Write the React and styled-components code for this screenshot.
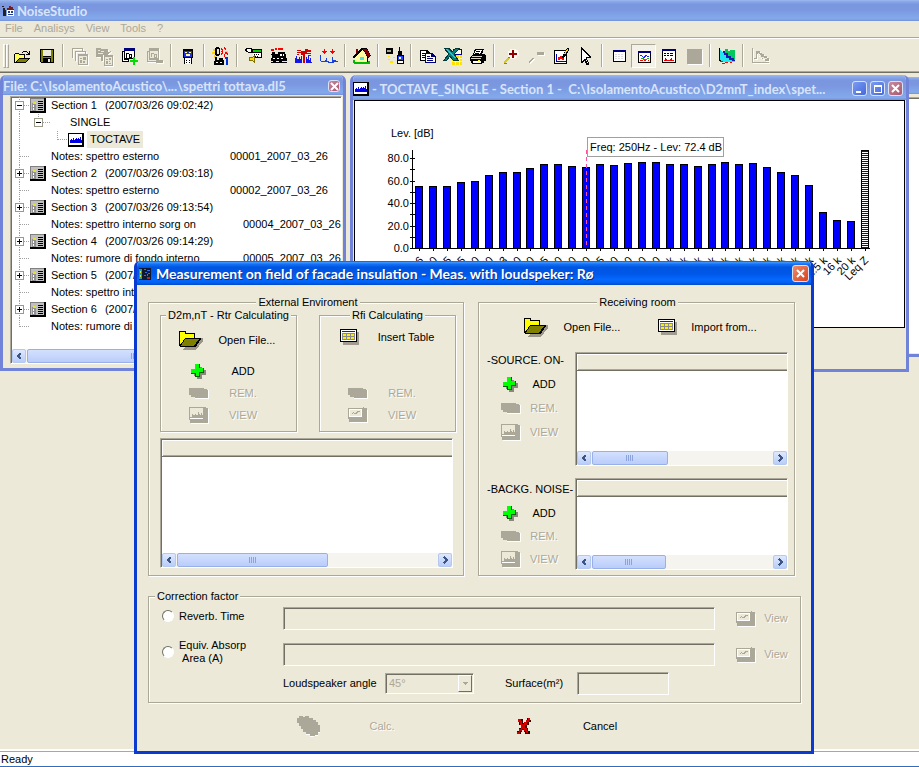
import React from "react"
import styled, { createGlobalStyle, css } from "styled-components"

const FACE = "#ece9d8"
const SHADOW = "#aca899"
const DARK = "#716f64"

const GlobalStyle = createGlobalStyle`
    * { box-sizing: border-box; }
    body {
        margin: 0;
        background: ${FACE};
        color: #000;
        font: 11px/13px "Liberation Sans", Arial, sans-serif;
    }
    button, input, select {
        font: inherit;
        color: inherit;
        margin: 0;
        padding: 0;
        border: 0;
        background: none;
    }
    svg { display: block; flex: none; }
`

/* ---------- data ---------- */

const menus = ["File", "Analisys", "View", "Tools", "?"]

const tree = [
    { type: "section", label: "Section 1", date: "(2007/03/26 09:02:42)", open: true },
    { type: "group", label: "SINGLE" },
    { type: "leaf", label: "TOCTAVE" },
    { type: "note", label: "Notes: spettro esterno", code: "00001_2007_03_26" },
    { type: "section", label: "Section 2", date: "(2007/03/26 09:03:18)" },
    { type: "note", label: "Notes: spettro esterno", code: "00002_2007_03_26" },
    { type: "section", label: "Section 3", date: "(2007/03/26 09:13:54)" },
    { type: "note", label: "Notes: spettro interno sorg on", code: "00004_2007_03_26" },
    { type: "section", label: "Section 4", date: "(2007/03/26 09:14:29)" },
    { type: "note", label: "Notes: rumore di fondo interno", code: "00005_2007_03_26" },
    { type: "section", label: "Section 5", date: "(2007/03/26 09:15:12)" },
    { type: "note", label: "Notes: spettro interno", code: "" },
    { type: "section", label: "Section 6", date: "(2007/03/26 09:16:03)" },
    { type: "note", label: "Notes: rumore di fondo", code: "", last: true },
]

// [band, bar height in chart units]
const bands = [
    ["16", 62], ["20", 62], ["25", 62], ["31.5", 66], ["40", 67], ["50", 73], ["63", 76], ["80", 76],
    ["100", 80], ["125", 84], ["160", 84], ["200", 82], ["250", 81], ["315", 84], ["400", 83], ["500", 85],
    ["630", 86], ["800", 86], ["1 k", 84], ["1.25 k", 84], ["1.6 k", 82], ["2 k", 84], ["2.5 k", 86], ["3.15 k", 84],
    ["4 k", 85], ["5 k", 81], ["6.3 k", 76], ["8 k", 73], ["10 k", 63], ["12.5 k", 36], ["16 k", 28], ["20 k", 27],
]

/* ---------- icons ---------- */

const Svg = ({ w = 20, h = 20, children }) => (
    <svg width={w} height={h} viewBox={`0 0 ${w} ${h}`} shapeRendering="crispEdges" aria-hidden="true">
        {children}
    </svg>
)

const Sheet = ({ x, y, c = "#000", bg = FACE }) => (
    <g>
        <path d={`M${x} ${y}h9v11h-9z`} fill={c} />
        <path d={`M${x + 1} ${y + 2}h7v8h-7z`} fill={bg} />
        <path d={`M${x + 2} ${y + 4}h2v1h-2zM${x + 5} ${y + 3}h2v2h-2zM${x + 2} ${y + 6}h2v3h-2zM${x + 5} ${y + 6}h1v1h-1zM${x + 5} ${y + 8}h2v1h-2z`} fill={c} />
    </g>
)

const icons = {
    open: (
        <Svg>
            <path d="M2 8h1V7h4v1h6v4h5l-4 5H2z" />
            <path d="M3 8h4v1h5v3H7l-4 4z" fill="#ffff5a" />
            <path d="M7 13h9l-3 3H4z" fill="#808000" />
            <path d="M10 6h1V5h4v1h1v1h1V5h1v4h-4V8h2V7h-1V6h-4v1h-1z" />
        </Svg>
    ),
    save: (
        <Svg>
            <path d="M3 3h14v14H4l-1-1z" />
            <path d="M4 4h2v7h8V4h2v12h-2v-4H6v4H4z" fill="#808000" />
            <path d="M6 4h8v6H6z" fill={FACE} />
            <path d="M11 13h2v3h-2z" fill={FACE} />
        </Svg>
    ),
    pages: (
        <Svg>
            <path d="M2 2h11v1H3v9H2zM12 3h1v2h-1zM5 5h11v1H6v9H5zM15 6h1v2h-1z" fill={SHADOW} />
            <path d="M8 8h10v11H8z" fill={SHADOW} />
            <path d="M9 10h8v8H9z" fill={FACE} />
            <path d="M10 12h2v1h-2zM13 11h3v3h-3zM10 14h2v3h-2zM13 15h2v2h-2z" fill={SHADOW} />
        </Svg>
    ),
    folderPages: (
        <Svg>
            <path d="M1 2h5v1h7v3l3-1-4 4H8l-3 2H1z" fill={SHADOW} />
            <path d="M3 4h2v1H3zM6 5h3v1H6zM3 7h5v1H3z" fill={FACE} />
            <Sheet x={9} y={9} c={SHADOW} />
            <path d="M6 8h2v7H6z" fill={SHADOW} />
        </Svg>
    ),
    addPage: (
        <Svg>
            <path d="M2 5h2V2h11v11H9v3H2z" />
            <path d="M4 2h11v3H4z" fill="#00007b" />
            <path d="M5 5h9v7H5z" fill="#fff" />
            <path d="M3 6h1v8h4v1H3z" fill="#fff" />
            <path d="M6 7h3v1H6zM6 7h1v5H6zM9 8h1v4H9zM9 8h3v1H9zM11 8h1v4h-1zM9 11h3v1H9z" />
            <path d="M13 11h2v3h3v2h-3v3h-2v-3h-3v-2h3z" fill="#00e000" />
        </Svg>
    ),
    remPage: (
        <Svg>
            <path d="M2 5h2V2h10v12h4v3h-7v-1H2z" fill={SHADOW} />
            <path d="M5 5h8v7H5zM3 6h1v8h7v1H3z" fill={FACE} />
            <path d="M6 7h3v1H6zM6 7h1v4H6zM9 8h3v4H9z" fill={SHADOW} />
            <path d="M10 9h1v2h-1z" fill={FACE} />
        </Svg>
    ),
    device: (
        <Svg>
            <path d="M5 3h10v8l-1 2v5H6v-5l-1-2z" />
            <path d="M7 12h6v6H7z" fill="#fff" />
            <path d="M6 5h8v6H6z" fill="#2233dd" />
            <path d="M7 6h2v1H7zM11 6h2v1h-2zM8 8h4v2H8z" fill="#ffffa0" />
            <path d="M8 14h1v1H8zM11 14h1v1h-1zM8 16h1v1H8zM11 16h1v1h-1z" />
        </Svg>
    ),
    speaker: (
        <Svg>
            <path d="M2 3h3v2H2zM1 6h3v2H1zM3 9h2v3H3zM14 5h3v3h-3z" fill="#ffd800" />
            <path d="M5 1h3v1h1v7H8v1H5V9H4V2h1z" />
            <path d="M6 3h2v5H6z" fill={FACE} />
            <path d="M10 2h1v1h1v5h-1v1h-1V7h1V4h-1zM13 1h1v1h1v2h-1V3h-1zM14 6h2v1h1v2h-1V8h-2zM13 8h1v3h-1zM10 5h1v1h-1z" fill="#f00" />
            <path d="M4 11h2v3h2v-2h4v2h1v5H3v-4h1z" />
            <path d="M5 16h2v1H5zM9 16h2v1H9z" fill="#fff" />
            <path d="M14 11h3v8h-2v-6h-1z" fill="#0033dd" />
        </Svg>
    ),
    noise: (
        <Svg>
            <path d="M2 2h6v1h10v9h-7V7H4V6H2V5H1V3h1z" />
            <path d="M3 3h4v3H4V5H3z" fill="#fff" />
            <path d="M9 4h8v2H9z" fill="#00d000" />
            <path d="M9 7h8v4H9z" fill="#fff" />
            <path d="M10 8h1v1h-1zM12 8h1v1h-1zM14 8h1v1h-1zM11 10h1v1h-1zM13 10h1v1h-1z" />
            <path d="M5 11h3l3-3v10l-3-3H5z" fill="#807000" />
            <path d="M6 12h2l2-2v6l-2-2H6z" fill="#ffe000" />
        </Svg>
    ),
    train: (
        <Svg>
            <path d="M2 3h3v2H2zM6 2h2v2H6zM9 2h5v2H9z" fill="#f00" />
            <path d="M3 6h3v2h3V6h7v2h1v4h1v3H2v-3h1V9H2V8h1z" />
            <path d="M11 8h2v2h-2zM14 8h1v2h-1zM4 12h2v1H4zM8 12h2v1H8zM12 12h2v1h-2z" fill="#fff" />
            <path d="M2 16h16v1H2zM4 14h3v3H4zM10 14h3v3h-3z" />
        </Svg>
    ),
    impact: (
        <Svg>
            <path d="M3 4h4v1h4V3h3v1h3v2h-4v1h4v1h-6V7H9v2H7V7H3V6h4V5H3z" fill="#d00000" />
            <path d="M9 6h2v11H9zM3 8h2v1H3zM14 9h3v1h-3z" fill="#d00000" />
            <path d="M1 12h1v-2h1v3h2v-2h1v2h1v-3h1v7h4v-6h1v2h1v-3h1v4h1v-2h1v4h1v1H1z" fill="#1515e8" />
        </Svg>
    ),
    dips: (
        <Svg>
            <path d="M5 3h1v2h2v1H7v1H6v1H5V7H4V6H3V5h2zM13 3h1v2h2v1h-1v1h-1v1h-1V7h-1V6h-1V5h2z" fill="#f00" />
            <path d="M1 9h1v6h4v-1h1v-2h1v3h2v1h3v-5h1v3h3v1h2v1h-4v1h-6v-1H2v-1H1z" fill="#1540e0" />
        </Svg>
    ),
    house: (
        <Svg>
            <path d="M1 14h3v2h10l4-1v3H2v-1H1z" fill="#00b800" />
            <path d="M10 3l-7 7v6h12v-6z" fill="#ffffa0" />
            <path d="M10 2h5l4 8-3 2z" fill="#000" />
            <path d="M11 3h4l3 6-2 2z" fill="#800000" />
            <path d="M8 11h4v3H8z" fill="#4fe0e8" />
            <path d="M4 3h2v4H4z" fill="#800000" />
            <path d="M1 10h1V9h1V8h1V7h1V6h1V5h1V4h1V3h1V2h2v2h-1v1H9v1H8v1H7v1H6v1H5v1H4v1H3v1H1z" />
            <path d="M15 11h1v5h-1z" />
        </Svg>
    ),
    transfer: (
        <Svg>
            <path d="M1 2h7v6H1z" />
            <path d="M2 4h4v2H2z" fill="#a8a890" />
            <path d="M3 10h2v1H3zM3 13h2v1H3zM5 15h3v2H5zM8 11h2v1H8z" fill="#ffe600" />
            <path d="M14 1h1v4h2v4h2v9h-7v-9h1V5h1z" />
            <path d="M13 10h5v4h-5z" fill="#2244ff" />
            <path d="M14 11h2v2h-2z" fill="#fff" />
            <path d="M13 15h5v2h-5z" fill="#fff" />
        </Svg>
    ),
    copy: (
        <Svg>
            <path d="M2 4h7l3 3v8H2z" />
            <path d="M3 5h5v3h3v6H3z" fill="#fff" />
            <path d="M4 7h3v1H4zM4 9h5v1H4zM4 11h5v1H4z" />
            <path d="M7 7h7l4 4v6H7z" fill="#00007b" />
            <path d="M8 8h5v3h4v5H8z" fill="#fff" />
            <path d="M9 10h3v1H9zM9 12h6v1H9zM9 14h6v1H9z" fill="#00007b" />
        </Svg>
    ),
    excel: (
        <Svg>
            <path d="M10 3h8v5h-8z" fill="#ffe" stroke="#00a" strokeWidth="1" />
            <path d="M9 9h10v10H9z" fill="#ffe100" />
            <path d="M9 12h10M9 15h10M12 9v10M16 9v10" stroke="#fff8a0" />
            <path d="M1 2h5l3 4 4-4h4l-6 6 4 6h-5l-3-4-3 4H1l5-6z" fill="#008080" stroke="#003838" strokeWidth="1" />
            <path d="M3 3h2l8 9h-2z" fill="#30c0c8" />
        </Svg>
    ),
    print: (
        <Svg>
            <path d="M7 3h9l-2 5h3v1h1v6h-2v2h-2v1H4v-1H3v-2H2v-4l3-3z" />
            <path d="M8 4h6l-2 4H6z" fill="#fff" />
            <path d="M8 5h4v1H8zM7 7h4v1H7z" />
            <path d="M4 10h10v1H4zM3 12h10v1H3z" fill="#d8d4c4" />
            <path d="M5 15h8v2H5z" fill="#fff" />
            <path d="M10 14h2v1h-2z" fill="#ff0" />
        </Svg>
    ),
    zoomIn: (
        <Svg>
            <path d="M9 3h6v1h2v2h1v4h-2v2h-2v1H9v-2H7V5h2z" fill="#fff8f0" />
            <path d="M11 4h2v3h3v2h-3v3h-2V9H8V7h3z" fill="#900000" />
            <path d="M7 11h2v2H8v1H7v1H6v1H5v1H3v-2h1v-1h1v-1h1v-1h1z" fill="#d8c820" />
            <path d="M7 11h2v1H7zM3 17h3v1H3z" fill="#807c60" />
        </Svg>
    ),
    zoomOut: (
        <Svg>
            <path d="M11 6h7v3h-7z" fill={SHADOW} />
            <path d="M3 15h1v-1h1v-1h1v-1h2v1H7v1H6v1H5v1H4v1H3z" fill={SHADOW} />
        </Svg>
    ),
    chartEdit: (
        <Svg>
            <path d="M3 4h13v14H3z" />
            <path d="M4 5h11v12H4z" fill="#fff" />
            <path d="M5 8h1v7h9v1H5z" fill="#00b" />
            <path d="M7 11h2v-1h2v2h2v2h-2v-1H9v1H7z" fill="#f00" />
            <path d="M12 9l4-7h2v2l-4 7-3 1z" />
            <path d="M13 8l3-5h1v1l-3 5z" fill="#ffd800" />
        </Svg>
    ),
    arrow: (
        <Svg>
            <path d="M5 1h1v1h1v1h1v1h1v1h1v1h1v1h1v1h1v1h1v1h1v2h-4v2h1v2h1v3h-3v-2h-1v-2H8v1H7v1H5z" />
            <path d="M6 4h1v1h1v1h1v1h1v1h1v1h1v1h1v1h-3v3h1v2h1v1h-1v-2h-1v-2H8v1H7v1H6z" fill="#fff" />
        </Svg>
    ),
    win: (
        <Svg>
            <path d="M4 4h13v12H4z" />
            <path d="M4 4h13v2H4z" fill="#00007b" />
            <path d="M5 6h11v9H5z" fill="#fff" />
            <path d="M6 8h9M6 10h9M6 12h9" stroke="#ddd" strokeDasharray="2 1" />
        </Svg>
    ),
    winChart: (
        <Svg>
            <path d="M4 5h13v12H4z" />
            <path d="M4 5h13v2H4z" fill="#00007b" />
            <path d="M5 7h11v9H5z" fill="#fff" />
            <path d="M6 9h2v1h1v1h1v-1h1V9h2v1h2v1h-2v-1h-1v1h-1v1H9v-1H8v-1H6z" fill="#22f" />
            <path d="M7 12h3v1h3v-1h2v1h-2v1H9v-1H7z" fill="#0b0" />
            <path d="M6 14h3v1H6zM10 14h2v1h-2zM13 15h2v-1h-1z" fill="#f00" />
        </Svg>
    ),
    winTable: (
        <Svg>
            <path d="M3 3h14v14H3z" />
            <path d="M3 3h14v2H3z" fill="#00007b" />
            <path d="M4 5h12v11H4z" fill="#fff" />
            <path d="M5 7h2v1H5zM8 7h2v1H8zM11 7h3v1h-3zM5 9h2v1H5zM8 9h2v1H8zM11 9h3v1h-3z" />
            <path d="M5 14h2v-1h1v1h3v-1h1v1h3v1H5z" fill="#f00" />
            <path d="M6 12h1v3H6zM12 12h1v3h-1z" fill="#22f" />
        </Svg>
    ),
    square: (
        <Svg>
            <path d="M3 3h15v15H3z" fill={SHADOW} />
        </Svg>
    ),
    surface: (
        <Svg>
            <path d="M2 4h2l2 3 3 1 4 4 5 1v3H8l-4-1-2-4z" fill="#20e8f0" />
            <path d="M8 3h3v2h2V4h5v10h-3v-2h-3v-2H9V8H7V6h1z" fill="#00c85a" />
            <path d="M6 5h2v2h3v3h3v2h3v2h1v1h-3v-1h-3v-2h-3V9H7V7H6z" fill="#1818b0" />
            <path d="M2 2h1v12h1v1H2z" />
            <path d="M3 15h3v1H3zM8 16h3v1H8zM13 16h2v1h-2zM5 17h3v1H5z" fill="#f00" />
        </Svg>
    ),
    decay: (
        <Svg>
            <path d="M2 2h1v14h16v1H2zM4 12h2V5h4v2h2v1h2v2h3v2h2v3h-4v-2h-3v-2h-2V8H7v5H4z" fill={SHADOW} />
            <path d="M8 7h1v2h2v2h3v1h3v1h-4v-1h-3v-2H8z" fill={FACE} />
        </Svg>
    ),
}

const FolderIcon = () => (
    <Svg w={26} h={20}>
        <path d="M5 20V19L23 8h2v3l-7 9z" fill="#9a978a" />
        <path d="M1 1h7v2h9v5h6v2h-1v1h-1v2h-1v1h-1v2h-1v1H2v-1H1z" />
        <path d="M2 2h5v2h9v4H7L5 11 2 15z" fill="#ffff00" />
        <path d="M7 9h14l-5 7H3z" fill="#808000" />
    </Svg>
)

const TableIcon = () => (
    <Svg w={20} h={16}>
        <path d="M3 3h16v13H3z" fill="#a09d90" />
        <path d="M0 0h17v13H0z" />
        <path d="M1 1h15v11H1z" fill="#fff" />
        <path d="M2 4h13v7H2z" fill="#8a8a8a" />
        <path d="M2 2h13v1H2z" fill="#1414c8" />
        <path d="M3 5h3v2H3zM7 5h3v2H7zM11 5h3v2h-3zM3 8h3v2H3zM7 8h3v2H7zM11 8h3v2h-3z" fill="#fff000" />
    </Svg>
)

const PlusIcon = () => (
    <Svg w={20} h={16}>
        <path d="M8 4h5v3h4v5h-4v4H8v-3H5V8h3z" fill="#8a877c" />
        <path d="M6 1h5v4h4v5h-4v4H6v-3H2V6h4z" fill="#006000" />
        <path d="M6 1h4v4h4v4h-4v4H7v-3H2V6h4z" fill="#00ff00" />
    </Svg>
)

const MinusIcon = () => (
    <Svg w={20} h={12}>
        <path d="M2 3h18v9H6V9H2z" fill="#fff" />
        <path d="M0 1h15v1h3v1h1v8H6v-1H2V8H0z" fill={SHADOW} />
    </Svg>
)

const SpectrumIcon = () => (
    <Svg w={20} h={18}>
        <path d="M2 3h18v15H2z" fill="#fff" />
        <path d="M0 1h14l5 1v15H1v-3H0z" fill={SHADOW} />
        <path d="M1 2h13v7h-1V7h-1v2h-1V8h-1V6H9v3H7V8H6v1H4V8H3v3H1z" fill={FACE} />
        <path d="M1 12h13v1H1z" fill="#fff" />
    </Svg>
)

const TrendIcon = () => (
    <Svg w={20} h={16}>
        <path d="M2 3h18v13H2z" fill="#fff" />
        <path d="M0 1h15V0h1v1h3v14H1v-3H0z" fill={SHADOW} />
        <path d="M1 2h13v8H1z" fill="#fff" />
        <path d="M2 3h11v6H2z" fill={FACE} />
        <path d="M3 7h1V6h1V5h1v1h2V5h1V4h3v1h-2v1H9v1H6V6H5v1z" fill={SHADOW} />
    </Svg>
)

const BlobIcon = () => (
    <Svg w={26} h={22}>
        <path d="M4 2h4v1h2V2h3v2h4v2h2v3h3v2h2v7h-2v3h-4v1h-4v-2h-4v-3H8v-3H5v-3H3V8H2V4h2z" fill="#fff" />
        <path d="M3 1h4v1h2V1h4v2h4v2h3v2h2v3h2v7h-2v3h-3v1h-5v-2H10v-2H7v-3H5v-3H3V8H1V3h2z" fill={SHADOW} />
    </Svg>
)

const CrossIcon = () => (
    <Svg w={16} h={18}>
        <path d="M3 2h4v4h3V3h1V1h3v2h1v2h-2v3h-2v3h1v3h2v3H9v-2H8v-2H6v2H5v2H1v-3h2v-3h2V8H3V5H2z" fill="#300" />
        <path d="M2 2h3v2h1v3h2V5h2V3h2V1h2v2h-1v2h-2v3H9v3h2v3h1v2h-2v-2H8v-2H6v2H4v3H1v-2h2v-3h2V8H4V5H2z" fill="#d00000" />
    </Svg>
)

const ReportIcon = () => (
    <Svg w={16} h={15}>
        <path d="M0 0h16v15H0z" />
        <path d="M0 0h14v13H0z" fill="#808080" />
        <path d="M1 1h13v12H1z" fill="#c0c0c0" />
        <path d="M2 5h4v8H2z" fill="#909090" />
        <path d="M3 7h1v2H3zM3 10h1v2H3z" fill="#fff" />
        <path d="M3 4h3v2H3z" fill="#f0e020" />
        <path d="M8 3h5v1H8zM8 5h5v1H8zM8 7h5v1H8zM8 9h5v1H8zM8 11h5v1H8z" />
    </Svg>
)

const WaveIcon = () => (
    <Svg w={16} h={14}>
        <path d="M0 0h16v14H0z" />
        <path d="M1 1h13v11H1z" fill="#fff" />
        <path d="M2 10V7h1V6h1v1h1V5h1v2h1V6h1V5h1v1h1V5h1v1h1V4h1v3h1v3z" fill="#0000e0" />
    </Svg>
)

const AppIcon = () => (
    <Svg w={12} h={12}>
        <path d="M1 3h2v2h1v6H1z" fill="#222" />
        <path d="M5 4l3-3 4 3v7H5z" fill="#fff" />
        <path d="M5 3h2V1h2v1h2v2h1v1H5z" fill="#702020" />
        <path d="M6 6h2v2H6zM9 6h2v2H9zM6 9h5v1H6z" fill="#223c90" />
        <path d="M0 1h2v1H0z" fill="#222" />
    </Svg>
)

const DialogIcon = () => (
    <Svg w={12} h={12}>
        <path d="M0 0h12v12H0z" fill="#101830" />
        <path d="M0 1h3v10H0z" fill="#20a0a0" />
        <path d="M1 3h1v2H1zM1 7h1v2H1z" fill="#e0e020" />
        <path d="M5 1h2v1H5zM8 2h3v1H8zM6 4h2v1H6zM9 5h2v1H9zM5 7h2v1H5zM8 6h1v2H8z" fill="#2a6cff" />
        <path d="M8 9h3v2H8z" fill="#c02020" />
    </Svg>
)

const glyphs = {
    min: <path d="M3 9h5v2H3z" fill="#fff" />,
    max: <path d="M3 3h8v8H3zM4 5v5h6V5z" fill="#fff" fillRule="evenodd" />,
    close: <path d="M3 3l7 7M10 3l-7 7" stroke="#fff" strokeWidth="2" shapeRendering="auto" />,
}

/* ---------- windows ---------- */

const Caption = ({ kind, tone, label, size }) => (
    <CaptionButton type="button" $tone={tone} $size={size} aria-label={label}>
        <Svg w={13} h={13}>{glyphs[kind]}</Svg>
    </CaptionButton>
)

const ScrollBar = ({ thumb }) => (
    <Scroll>
        <ScrollButton type="button" tabIndex={-1} aria-label="Scroll left">
            <Svg w={6} h={8}><path d="M0 4l4-4v1h1v1L3 4l2 2v1H4v1z" fill="#3d5585" /></Svg>
        </ScrollButton>
        <ScrollTrack>
            <ScrollThumb style={{ width: `${thumb}%` }}>
                <i /><i /><i /><i />
            </ScrollThumb>
        </ScrollTrack>
        <ScrollButton type="button" tabIndex={-1} aria-label="Scroll right">
            <Svg w={6} h={8}><path d="M6 4L2 0v1H1v1l2 2-2 2v1h1v1z" fill="#3d5585" /></Svg>
        </ScrollButton>
    </Scroll>
)

const treeIndent = { section: 18, note: 18, group: 48, leaf: 56 }

const TreeLines = ({ type, open, last }) => (
    <Svg w={treeIndent[type]} h={17}>
        <g stroke="#a0a0a0" strokeDasharray="1 1" fill="none">
            <path d={last ? "M7.5 0v9" : "M7.5 0v17"} />
            {(type === "section" || type === "note") && <path d="M8 8.5h10" />}
            {type === "group" && <path d="M26.5 0v9M27 8.5h11" />}
            {type === "leaf" && <path d="M45.5 0v9M46 8.5h10" />}
        </g>
        {(type === "section" || type === "group") && (
            <g transform={type === "group" ? "translate(22 4)" : "translate(3 4)"}>
                <path d="M0 0h9v9H0z" fill="#9a9a8a" />
                <path d="M1 1h7v7H1z" fill="#fff" />
                <path d={open || type === "group" ? "M2 4h5v1H2z" : "M2 4h2V2h1v2h2v1H5v2H4V5H2z"} />
            </g>
        )}
    </Svg>
)

const TreeRow = ({ item }) => (
    <Row>
        <TreeLines {...item} />
        {item.type === "section" && <ReportIcon />}
        {item.type === "leaf" && <WaveIcon />}
        {item.type === "section" && <NodeLabel>{item.label}<Stamp>{item.date}</Stamp></NodeLabel>}
        {item.type === "group" && <GroupLabel>{item.label}</GroupLabel>}
        {item.type === "leaf" && <PickedLabel>{item.label}</PickedLabel>}
        {item.type === "note" && <><Note>{item.label}</Note><span>{item.code}</span></>}
    </Row>
)

const FileWindow = () => (
    <FileFrame>
        <TitleBar $h={20}>
            <Title>File: C:\IsolamentoAcustico\...\spettri tottava.dl5</Title>
            <Caption kind="close" tone="rose" size={12} label="Close file" />
        </TitleBar>
        <TreeBox>
            <Rows>
                {tree.map((item, i) => <TreeRow key={i} item={item} />)}
            </Rows>
            <ScrollBar thumb={72} />
        </TreeBox>
    </FileFrame>
)

const Chart = () => (
    <svg width="550" height="226" viewBox="355 101 550 226" shapeRendering="crispEdges" role="img" aria-label="Level by frequency band">
        <ChartText x="391" y="137">Lev. [dB]</ChartText>
        <path d="M412 150h1v99h-1zM412 248h458v1h-458z" />
        {[80, 60, 40, 20, 0].map((v, i) => (
            <g key={v}>
                <path d={`M410 ${158 + Math.round(i * 22.5)}h5v1h-5z`} />
                {v > 0 && <path d={`M410 ${169 + Math.round(i * 22.5)}h5v1h-5z`} />}
                <ChartText x="409" y={162 + Math.round(i * 22.5)} textAnchor="end">{v}.0</ChartText>
            </g>
        ))}
        {bands.map(([name, h], i) => {
            const x = 415 + Math.round(i * 13.93)
            return (
                <g key={name}>
                    <rect x={x} y={248 - h} width="8" height={h} />
                    <rect x={x + 1} y={249 - h} width="6" height={h - 1} fill="#0000ff" />
                    <path d={`M${x + 4} 249h1v2h-1z`} />
                    <ChartText textAnchor="end" transform={`translate(${x + 9} 261) rotate(-45)`}>{name}</ChartText>
                </g>
            )
        })}
        <rect x="861" y="150" width="8" height="98" />
        <rect x="862" y="151" width="6" height="97" fill="#0000ff" />
        <path d="M865 152v96" stroke="#fff" strokeWidth="6" strokeDasharray="1 1" />
        <path d="M865 249h1v2h-1z" />
        <ChartText textAnchor="end" transform="translate(869 261) rotate(-45)">Leq Z</ChartText>
        <path d="M586.5 150v98" stroke="#ff4fa0" strokeDasharray="4 3" />
        <rect x="587.5" y="137.5" width="136" height="19" fill="#fff" stroke="#a0a0a0" />
        <ChartText x="590" y="151">Freq: 250Hz - Lev: 72.4 dB</ChartText>
    </svg>
)

const GraphWindow = () => (
    <GraphFrame>
        <TitleBar $h={25}>
            <WaveIcon />
            <Title>- TOCTAVE_SINGLE - Section 1 -&nbsp; C:\IsolamentoAcustico\D2mnT_index\spet...</Title>
            <Caption kind="min" tone="soft" size={15} label="Minimize" />
            <Caption kind="max" tone="soft" size={15} label="Maximize" />
            <Caption kind="close" tone="rose" size={15} label="Close graph" />
        </TitleBar>
        <Plot><Chart /></Plot>
    </GraphFrame>
)

/* ---------- dialog ---------- */

const Action = ({ icon, children, pad = 25, gap = 11, label = 40, h = 22, disabled }) => (
    <ActionButton type="button" disabled={disabled} $pad={pad} $gap={gap} $label={label} $h={h}>
        <span>{icon}</span>
        <span>{children}</span>
    </ActionButton>
)

const EditActions = (props) => (
    <>
        <Action {...props} icon={<PlusIcon />}>ADD</Action>
        <Action {...props} icon={<MinusIcon />} disabled>REM.</Action>
        <Action {...props} icon={<SpectrumIcon />} disabled>VIEW</Action>
    </>
)

const ListView = ({ h, thumb }) => (
    <ListBox $h={h}>
        <ListHead />
        <ListBody />
        <ScrollBar thumb={thumb} />
    </ListBox>
)

const Dialog = () => (
    <DialogFrame role="dialog" aria-labelledby="dialog-title">
        <DialogTitle>
            <DialogIcon />
            <ActiveTitle id="dialog-title">Measurement on field of facade insulation - Meas. with loudspeker: Rø</ActiveTitle>
            <Caption kind="close" tone="red" size={17} label="Close" />
        </DialogTitle>
        <DialogBody>
            <Columns>
                <Group $pad="0 7px 6px 11px">
                    <legend>External Enviroment</legend>
                    <Pair>
                        <Group $pad="4px 0 5px">
                            <legend>D2m,nT - Rtr Calculating</legend>
                            <Stack>
                                <Action icon={<FolderIcon />} pad={17} gap={12} label={62} h={28}>Open File...</Action>
                                <Spacer />
                                <EditActions />
                            </Stack>
                        </Group>
                        <Group $pad="4px 0 5px">
                            <legend>Rfi Calculating</legend>
                            <Stack>
                                <Action icon={<TableIcon />} pad={17} gap={12} label={62}>Insert Table</Action>
                                <Spacer />
                                <Action icon={<MinusIcon />} disabled>REM.</Action>
                                <Action icon={<TrendIcon />} disabled>VIEW</Action>
                            </Stack>
                        </Group>
                    </Pair>
                    <ListView h={130} thumb={58} />
                </Group>
                <Group $pad="0 6px 5px 8px">
                    <legend>Receiving room</legend>
                    <Sources>
                        <Action icon={<FolderIcon />} pad={36} gap={12} label={62} h={36}>Open File...</Action>
                        <Action icon={<TableIcon />} pad={32} gap={12} label={62} h={36}>Import from...</Action>
                    </Sources>
                    <Feed>
                        <FeedSide>
                            <FeedName>-SOURCE. ON-</FeedName>
                            <EditStack $gap={2}><EditActions pad={11} gap={0} /></EditStack>
                        </FeedSide>
                        <ListView h={114} thumb={42} />
                    </Feed>
                    <Feed>
                        <FeedSide $top={3}>
                            <FeedName>-BACKG. NOISE-</FeedName>
                            <EditStack $gap={1}><EditActions pad={11} gap={0} /></EditStack>
                        </FeedSide>
                        <ListView h={92} thumb={41} />
                    </Feed>
                </Group>
            </Columns>
            <Correction>
                <legend>Correction factor</legend>
                <Factor>
                    <Radio type="radio" name="factor" id="reverb" />
                    <label htmlFor="reverb">Reverb. Time</label>
                    <Field aria-label="Reverb. Time value" disabled />
                    <Action icon={<TrendIcon />} pad={2} gap={3} label={28} disabled>View</Action>
                </Factor>
                <Factor>
                    <Radio type="radio" name="factor" id="absorp" />
                    <label htmlFor="absorp">Equiv. Absorp<br />&nbsp;Area (A)</label>
                    <Field aria-label="Equiv. Absorp Area value" disabled />
                    <Action icon={<TrendIcon />} pad={2} gap={3} label={28} disabled>View</Action>
                </Factor>
                <Extras>
                    <label htmlFor="angle">Loudspeaker angle</label>
                    <Combo>
                        <select id="angle" disabled defaultValue="45">
                            <option value="45">45°</option>
                        </select>
                        <ComboArrow><Svg w={5} h={3}><path d="M0 0h5v1H4v1H3v1H2V2H1V1H0z" fill={SHADOW} /></Svg></ComboArrow>
                    </Combo>
                    <label htmlFor="surface">Surface(m²)</label>
                    <Field id="surface" disabled />
                </Extras>
            </Correction>
            <Footer>
                <Action icon={<BlobIcon />} pad={0} gap={38} label={44} h={30} disabled>Calc.</Action>
                <Action icon={<CrossIcon />} pad={0} gap={41} label={44} h={30}>Cancel</Action>
            </Footer>
        </DialogBody>
    </DialogFrame>
)

/* ---------- page ---------- */

const toolGroups = [
    ["open", "save"],
    ["pages", "folderPages", "addPage", "remPage"],
    ["device"],
    ["speaker"],
    ["noise", "train", "impact", "dips"],
    ["house"],
    ["transfer"],
    ["copy", "excel", "print"],
    ["zoomIn", "zoomOut", "chartEdit", "arrow"],
    ["win", "winChart", "winTable", "square"],
    ["surface"],
    ["decay"],
]

const offTools = ["pages", "folderPages", "remPage", "zoomOut", "square", "decay"]

const App = () => (
    <>
        <GlobalStyle />
        <Shell>
            <MainTitle>
                <AppIcon />
                <Title>NoiseStudio</Title>
            </MainTitle>
            <MenuBar>
                {menus.map((m) => <button type="button" key={m}>{m}</button>)}
            </MenuBar>
            <ToolBar>
                <Grip /><Grip />
                {toolGroups.map((group) => (
                    <ToolGroup key={group[0]}>
                        {group.map((name) => (
                            <Tool
                                type="button"
                                key={name}
                                aria-label={name}
                                disabled={offTools.includes(name)}
                                $pressed={name === "winChart"}
                            >
                                {icons[name]}
                            </Tool>
                        ))}
                    </ToolGroup>
                ))}
            </ToolBar>
            <Desktop>
                <BackFrame>
                    <TitleBar $h={17} />
                    <BackPane />
                </BackFrame>
                <FileWindow />
                <GraphWindow />
            </Desktop>
            <Status>Ready</Status>
            <Dialog />
        </Shell>
    </>
)

export default App

/* ---------- styles ---------- */

const softBar = "linear-gradient(#9db8ee 0, #8aa8ea 8%, #7a96df 20%, #7b97e0 45%, #80a4e8 75%, #84a9ea 90%, #7390dc 100%)"
const blueBar = "linear-gradient(#0a50dc 0, #3b92ff 6%, #1270f5 14%, #0055e0 26%, #0058ea 55%, #0468ff 78%, #0060f0 90%, #0048c8 100%)"

const sunken = css`
    border: 1px solid;
    border-color: ${SHADOW} #fff #fff ${SHADOW};
    box-shadow: inset 1px 1px 0 ${DARK};
`

const Shell = styled.div`
    position: relative;
    display: flex;
    flex-direction: column;
    min-height: 100vh;
    overflow: hidden;
    background: ${FACE};
`

const Title = styled.h2`
    flex: 1;
    margin: 0;
    min-width: 0;
    overflow: hidden;
    white-space: nowrap;
    font: bold 13px/16px Lato, "Open Sans", sans-serif;
    color: #d8e4fa;
`

const ActiveTitle = styled(Title)`
    font-size: 14px;
    color: #fff;
    text-shadow: 1px 1px 0 #0a2f8a;
`

const MainTitle = styled.header`
    display: flex;
    align-items: center;
    gap: 3px;
    height: 21px;
    padding-left: 2px;
    background: ${softBar};
`

const MenuBar = styled.nav`
    display: flex;
    gap: 11px;
    height: 16px;
    padding: 0 5px 1px;
    color: ${SHADOW};
`

const ToolBar = styled.div`
    display: flex;
    align-items: center;
    height: 34px;
    padding: 2px 0 0 3px;
    border-top: 1px solid ${SHADOW};
    box-shadow: inset 0 1px 0 #fff;
`

const Grip = styled.i`
    width: 3px;
    height: 24px;
    border: 1px solid;
    border-color: #fff ${SHADOW} ${SHADOW} #fff;
`

const ToolGroup = styled.div`
    display: flex;
    align-items: center;

    & + &::before {
        content: "";
        height: 23px;
        margin: 0 3px;
        border-left: 1px solid ${SHADOW};
        border-right: 1px solid #fff;
    }
`

const Tool = styled.button`
    display: flex;
    align-items: center;
    justify-content: center;
    width: 25px;
    height: 24px;
    border: 1px solid transparent;
    ${props => props.$pressed && css`
        border-color: ${SHADOW} #fff #fff ${SHADOW};
        background: #f4f2e8;
    `}

    &:disabled svg {
        filter: drop-shadow(1px 1px 0 #fff);
    }
`

const Desktop = styled.main`
    position: relative;
    flex: 1;
    overflow: hidden;
    border: solid ${SHADOW};
    border-width: 1px 0;
    box-shadow: inset 0 1px 0 ${DARK}, inset 0 -2px 0 #fff;
`

const Frame = styled.section`
    position: absolute;
    display: flex;
    flex-direction: column;
    border: 3px solid #7083d8;
    border-top-width: 0;
    border-radius: 6px 6px 0 0;
    background: ${FACE};
    overflow: hidden;
`

const FileFrame = styled(Frame)`
    left: 0;
    top: 3px;
    width: 346px;
    height: 296px;
`

const GraphFrame = styled(Frame)`
    left: 350px;
    top: 3px;
    width: 559px;
    height: 297px;
`

const BackFrame = styled(Frame)`
    left: 600px;
    top: 5px;
    width: 420px;
    height: 280px;
`

const BackPane = styled.div`
    flex: 1;
    margin: 3px 0 1px;
    background: #fff;
    ${sunken}
`

const TitleBar = styled.div`
    display: flex;
    align-items: center;
    gap: 3px;
    flex: none;
    height: ${props => props.$h}px;
    padding: 2px 3px 0 0;
    background: ${softBar};
`

const tones = {
    soft: "linear-gradient(135deg, #7d9cf0, #4468dd)",
    rose: "linear-gradient(135deg, #c98a9c, #a85870)",
    red: "linear-gradient(135deg, #f08a68, #d8431c)",
}

const CaptionButton = styled.button`
    display: flex;
    align-items: center;
    justify-content: center;
    flex: none;
    width: ${props => props.$size}px;
    height: ${props => props.$size}px;
    border: 1px solid #d8e2f8;
    border-radius: 3px;
    background: ${props => tones[props.$tone]};
`

const TreeBox = styled.div`
    display: flex;
    flex-direction: column;
    flex: 1;
    min-height: 0;
    margin: 1px 1px 4px 7px;
    background: #fff;
    ${sunken}
    padding-left: 1px;
`

const Rows = styled.div`
    flex: 1;
    min-height: 0;
    overflow: hidden;
`

const Row = styled.div`
    display: flex;
    align-items: center;
    height: 17px;
    white-space: nowrap;
`

const NodeLabel = styled.span`
    margin-left: 5px;
`

const GroupLabel = styled.span`
    margin-left: 10px;
`

const PickedLabel = styled.span`
    margin-left: 3px;
    padding: 2px 3px;
    background: ${FACE};
`

const Stamp = styled.span`
    margin-left: 8px;
`

const Note = styled.span`
    min-width: 200px;
    padding: 0 47px 0 21px;
`

const Plot = styled.div`
    margin: 0 1px;
    border: 1px solid #000;
    background: #fff;
    overflow: hidden;
`

const ChartText = styled.text`
    font: 11px "Liberation Sans", Arial, sans-serif;
`

const Scroll = styled.div`
    display: flex;
    flex: none;
    height: 14px;
    background: #f5f4ee;
`

const ScrollButton = styled.button`
    display: flex;
    align-items: center;
    justify-content: center;
    width: 14px;
    border: 1px solid #b4c8f0;
    border-radius: 2px;
    background: linear-gradient(#dfe8fd, #b9cdf8);
`

const ScrollTrack = styled.div`
    flex: 1;
    display: flex;
    padding: 0 1px;
`

const ScrollThumb = styled.div`
    display: flex;
    align-items: center;
    justify-content: center;
    gap: 1px;
    border: 1px solid #98b0e8;
    border-radius: 2px;
    background: linear-gradient(#d3e0fe, #bacdf9);

    i {
        width: 1px;
        height: 6px;
        background: #8ba3dc;
    }
`

const Status = styled.footer`
    flex: none;
    height: 15px;
    padding: 1px;
    background: #fff;
    border-bottom: 1px solid #2f6fbd;
`

const DialogFrame = styled.section`
    position: absolute;
    left: 134px;
    top: 261px;
    width: 680px;
    border: 3px solid #0a3ad0;
    border-top: 0;
    border-radius: 6px 6px 0 0;
    background: ${FACE};
    overflow: hidden;
`

const DialogTitle = styled.div`
    display: flex;
    align-items: center;
    gap: 5px;
    height: 24px;
    padding: 1px 2px 0;
    background: ${blueBar};
`

const DialogBody = styled.div`
    padding: 11px 10px 2px 11px;
`

const Columns = styled.div`
    display: grid;
    grid-template-columns: 316fr 317fr;
    gap: 14px;
    margin-right: 6px;
`

const Group = styled.fieldset`
    min-width: 0;
    margin: 0;
    padding: ${props => props.$pad};
    border: 1px solid ${SHADOW};
    box-shadow: 1px 1px 0 #fff, inset 1px 1px 0 #fff;

    > legend {
        margin: 0 auto;
        padding: 0 2px;
        background: ${FACE};
    }
`

const Pair = styled.div`
    display: grid;
    grid-template-columns: 1fr 1fr;
    gap: 22px;
    margin-bottom: 6px;

    & + div {
        margin-right: 3px;
    }
`

const Stack = styled.div`
    display: flex;
    flex-direction: column;
    height: 100%;
`

const EditStack = styled.div`
    display: flex;
    flex-direction: column;
    gap: ${props => props.$gap}px;
`

const Spacer = styled.div`
    flex: 1;
    min-height: 6px;
`

const ActionButton = styled.button`
    display: grid;
    grid-template-columns: 26px ${props => props.$label}px;
    column-gap: ${props => props.$gap}px;
    align-items: center;
    height: ${props => props.$h}px;
    padding-left: ${props => props.$pad}px;
    white-space: nowrap;

    > span {
        display: flex;
        justify-content: center;
    }

    &:disabled {
        color: ${SHADOW};
        text-shadow: 1px 1px 0 #fff;
    }
`

const ListBox = styled.div`
    display: flex;
    flex-direction: column;
    height: ${props => props.$h}px;
    padding: 1px 0 0 1px;
    background: #fff;
    ${sunken}
`

const ListHead = styled.div`
    height: 17px;
    background: ${FACE};
    border-bottom: 1px solid ${DARK};
    box-shadow: inset 1px 1px 0 #fff, inset 0 -1px 0 ${SHADOW};
`

const ListBody = styled.div`
    flex: 1;
`

const Sources = styled.div`
    display: flex;
    margin-bottom: 7px;
`

const Feed = styled.div`
    display: grid;
    grid-template-columns: 88px 1fr;

    & + & {
        margin-top: 12px;
    }
`

const FeedSide = styled.div`
    padding-top: ${props => props.$top || 0}px;
`

const FeedName = styled.div`
    height: 21px;
    line-height: 16px;
    white-space: nowrap;
`

const Correction = styled(Group)`
    margin-top: 14px;
    padding: 4px 9px 8px 13px;

    > legend {
        margin: 0 0 0 -7px;
    }
`

const Factor = styled.div`
    display: grid;
    grid-template-columns: 17px 104px 1fr 60px;
    grid-template-rows: 23px;
    align-items: center;
    margin-bottom: 13px;

    & + & {
        margin-bottom: 6px;
    }

    label {
        margin-bottom: 5px;
    }
`

const Radio = styled.input`
    appearance: none;
    width: 12px;
    height: 12px;
    border: 1px solid;
    border-color: ${DARK} #fff #fff ${DARK};
    border-radius: 50%;
    background: #fff;

    ${Factor} & {
        margin-bottom: 6px;
    }
`

const Field = styled.input`
    min-width: 0;
    height: 23px;
    padding: 0 3px;
    background: ${FACE};
    ${sunken}

    ${Factor} & {
        margin-right: 16px;
    }
`

const Extras = styled.div`
    display: grid;
    grid-template-columns: 102px 120px 72px 92px;
    align-items: center;
    height: 22px;
    padding-left: 121px;
`

const Combo = styled.div`
    display: flex;
    height: 21px;
    margin-right: 31px;
    padding: 1px;
    ${sunken}

    select {
        flex: 1;
        min-width: 0;
        appearance: none;
        padding-left: 2px;
        color: ${SHADOW};
        opacity: 1;
    }
`

const ComboArrow = styled.span`
    display: flex;
    align-items: center;
    justify-content: center;
    width: 14px;
    pointer-events: none;
    border: 1px solid;
    border-color: #fff ${DARK} ${DARK} #fff;
`

const Footer = styled.div`
    display: flex;
    align-items: center;
    gap: 107px;
    height: 46px;
    padding-left: 148px;
`
